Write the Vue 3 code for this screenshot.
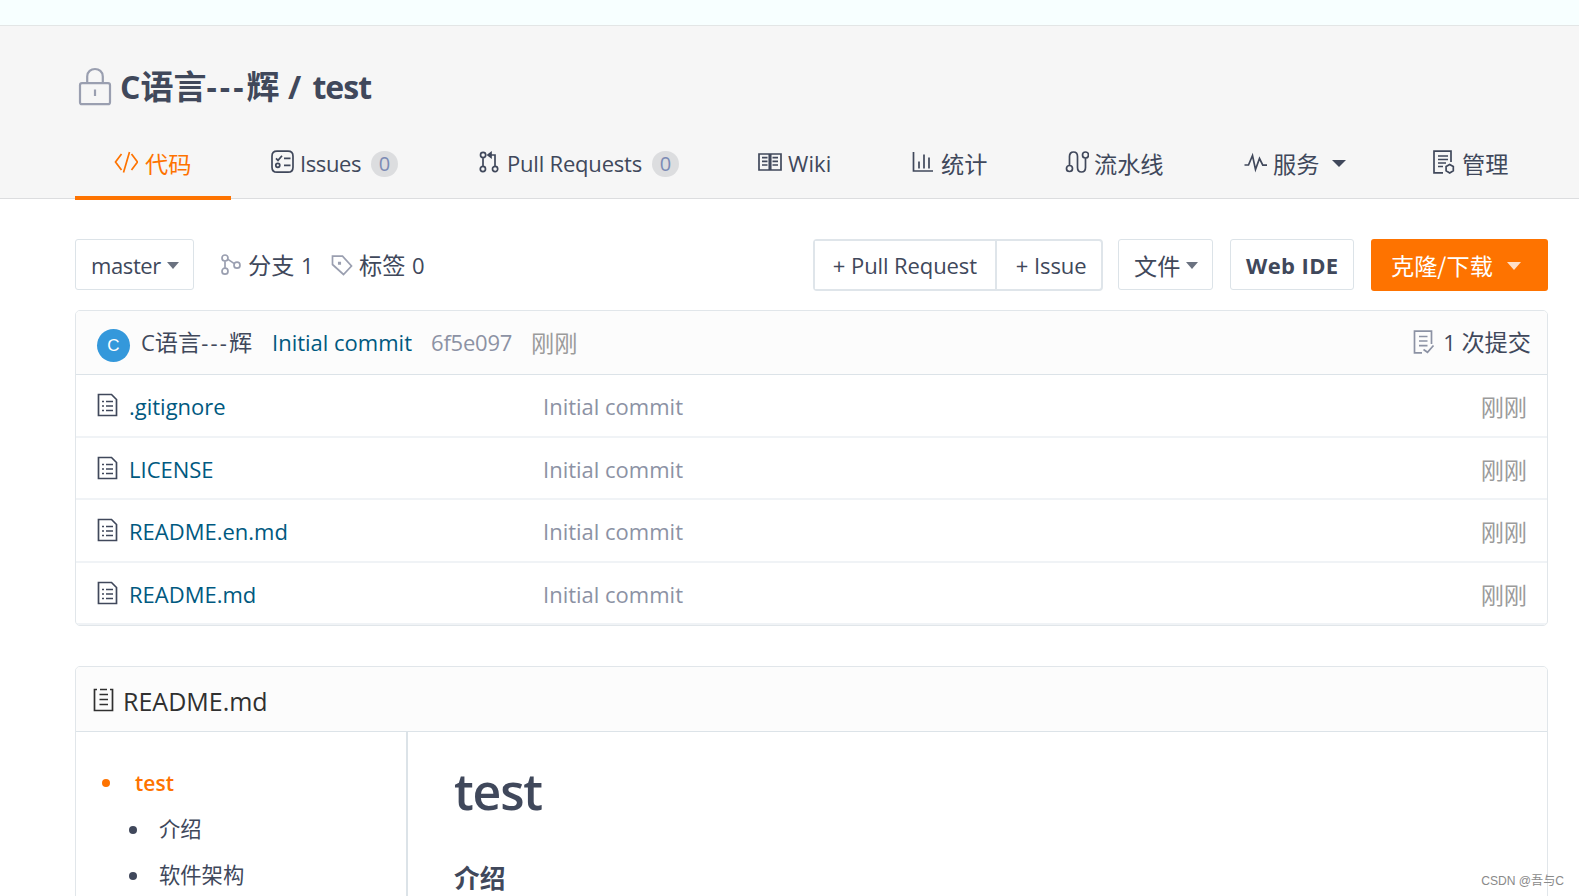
<script setup>
import { ref } from "vue";

// every icon is a stroked path on a 24x24 grid
const icons = {
  code: "M7.5 4L1.5 12l6 8M17.5 4l6 8-6 8M15.5 2L9.5 22.5",
  issues:
    "M7 1.2h11q5 0 5 5v11q0 5-5 5H7q-5 0-5-5V6.2q0-5 5-5zM6 8.4l2 2 4-4.6M14 8.3h6.5M14 15.3h6.5M5.8 15.3a2 2 0 1 0 4 0a2 2 0 1 0-4 0",
  pull: "M2.5 5a2.6 2.6 0 1 0 5.2 0a2.6 2.6 0 1 0-5.2 0M2.3 19a2.6 2.6 0 1 0 5.2 0a2.6 2.6 0 1 0-5.2 0M14.5 19a2.6 2.6 0 1 0 5.2 0a2.6 2.6 0 1 0-5.2 0M5 7.6v8.8M17 16.4V5H9.5M13 2.8L10 5l3 2.2z",
  wiki: "M1 4h22v16H1zM11.3 4v16M12.7 4v16M4 7.7h5.5M4 11.4h5.5M4 15h5.5M14.5 7.7H20M14.5 11.4H20M14.5 15H20",
  chart: "M1.5 2v19H21M7 11.5v7M12 4.5v14M17 7.5v11",
  pipe: "M1.5 18.5a3 3 0 1 0 6 0a3 3 0 1 0-6 0M4.5 15.5V6.5c0-6 8-6 8 0v11c0 6 8 6 8 0V8M17.5 5a3 3 0 1 0 6 0a3 3 0 1 0-6 0",
  pulse: "M.5 15h4L8.5 5.5l3 14L15.5 8.500l3.300 6.700h4.200",
  manage:
    "M10 22.8H1V1.2h17V12M5 6h10M5 9.5h10M5 13h8M5 16.5h5M16.7 14.5l3.6 2.1v4.2l-3.6 2.1-3.6-2.1v-4.2z",
  branch:
    "M2 5a3 3 0 1 0 6 0a3 3 0 1 0-6 0M2 18.2a3 3 0 1 0 6 0a3 3 0 1 0-6 0M14 12.2a3 3 0 1 0 6 0a3 3 0 1 0-6 0M5 8v7.2M8 6.4l6.3 4.2",
  tag: "M1.5 3.2h10l9 9.8-8 8.5-11-10zM7.8 9.7h1.4v1.2H7.8z",
  commits: "M9 22.8H1.5V1.2h17V14M6 6.5h8.5M6 11h8.5M6 15.7h8.5M10.5 19.5l4 2.8 6-6.8",
  file: "M1.5 1.5h13l5 5v16h-18zM5 8.5h2M9 8.5h7M5 13h2M9 13h7M5 17.5h2M9 17.5h7",
  readme: "M5 1.5H2.5v21h18v-21H18M8 1.5h7M7.5 6.5h8.5M7.5 11.5h8.500M7.500 16.500h8.500",
};

const tabs = ref([
  { icon: "code", label: "代码", cjk: true, active: true },
  { icon: "issues", label: "Issues", count: 0 },
  { icon: "pull", label: "Pull Requests", count: 0 },
  { icon: "wiki", label: "Wiki" },
  { icon: "chart", label: "统计", cjk: true },
  { icon: "pipe", label: "流水线", cjk: true },
  { icon: "pulse", label: "服务", cjk: true, caret: true },
  { icon: "manage", label: "管理", cjk: true },
]);

const files = ref([
  { name: ".gitignore", message: "Initial commit", time: "刚刚" },
  { name: "LICENSE", message: "Initial commit", time: "刚刚" },
  { name: "README.en.md", message: "Initial commit", time: "刚刚" },
  { name: "README.md", message: "Initial commit", time: "刚刚" },
]);
</script>

<template>
  <div class="page">
    <div class="notice"></div>
    <header class="repo-header">
      <h2 class="repo-title">
        <svg class="lock" viewBox="0 0 34 40">
          <path d="M4 16.2h26q2 0 2 2v17q0 2-2 2H4q-2 0-2-2v-17q0-2 2-2zM9.2 16V9.5c0-10 15.6-10 15.6 0V16M17 22.5v6.5" />
        </svg>
        <span>C<b>语言</b><i class="dash">---</i><b>辉</b> / <i class="repo-name">test</i></span>
      </h2>
      <nav class="tabs">
        <a v-for="tab in tabs" :key="tab.icon" class="tab" :class="['tab-' + tab.icon, { active: tab.active }]">
          <svg class="icon" viewBox="0 0 24 24"><path :d="icons[tab.icon]" /></svg>
          <span class="label" :class="{ cjk: tab.cjk }">{{ tab.label }}</span>
          <span v-if="tab.count !== undefined" class="badge">{{ tab.count }}</span>
          <i v-if="tab.caret" class="caret"></i>
        </a>
      </nav>
    </header>

    <main class="content">
      <div class="toolbar">
        <button class="btn branch-btn"><span>master</span><i class="caret"></i></button>
        <div class="stat stat-branch">
          <svg class="icon" viewBox="0 0 24 24"><path :d="icons.branch" /></svg>
          <span><b>分支</b> 1</span>
        </div>
        <div class="stat">
          <svg class="icon" viewBox="0 0 24 24"><path :d="icons.tag" /></svg>
          <span><b>标签</b> 0</span>
        </div>
        <div class="actions">
          <div class="btn-group">
            <button class="group-pull"><i class="plus">+</i><span>Pull Request</span></button>
            <button class="group-issue"><i class="plus">+</i><span>Issue</span></button>
          </div>
          <button class="btn file-btn"><span class="cjk">文件</span><i class="caret"></i></button>
          <button class="btn ide-btn"><span>Web IDE</span></button>
          <button class="clone-btn"><span class="cjk">克隆/下载</span><i class="caret"></i></button>
        </div>
      </div>

      <section class="box files">
        <div class="last-commit">
          <span class="avatar">C</span>
          <span class="author">C<b>语言</b><i class="dash">---</i><b>辉</b></span>
          <a class="link">Initial commit</a>
          <span class="sha">6f5e097</span>
          <span class="time cjk">刚刚</span>
          <div class="commit-count">
            <svg class="icon" viewBox="0 0 24 24"><path :d="icons.commits" /></svg>
            <span>1 <b>次提交</b></span>
          </div>
        </div>
        <div v-for="file in files" :key="file.name" class="file-row">
          <svg class="icon" viewBox="0 0 24 24"><path :d="icons.file" /></svg>
          <a class="file-name">{{ file.name }}</a>
          <span class="message">{{ file.message }}</span>
          <span class="time cjk">{{ file.time }}</span>
        </div>
      </section>

      <section class="box readme">
        <div class="readme-head">
          <svg class="icon" viewBox="0 0 24 24"><path :d="icons.readme" /></svg>
          <span>README.md</span>
        </div>
        <div class="readme-body">
          <ul class="toc">
            <li class="toc-root">test</li>
            <li class="cjk">介绍</li>
            <li class="cjk">软件架构</li>
          </ul>
          <article class="markdown">
            <h1>test</h1>
            <h4>介绍</h4>
          </article>
        </div>
      </section>
    </main>
    <div class="watermark">CSDN @吾与C</div>
  </div>
</template>

<style>
body {
  margin: 0;
  overflow: hidden;
}
</style>

<style scoped>
* {
  box-sizing: border-box;
}
.page {
  position: relative;
  height: 896px;
  overflow: hidden;
  background-color: #fff;
  color: #40485b;
  font-family: "Open Sans", "Noto Sans CJK SC", sans-serif;
  font-size: 22px;
  line-height: 32px;
  white-space: nowrap;
}
button {
  font: inherit;
  color: inherit;
  padding: 0;
  background-color: #fff;
  border: 0;
}
b {
  font-weight: inherit;
}
b,
.cjk {
  font-family: "Noto Sans CJK SC", sans-serif;
  font-size: 23.2px;
}
i {
  font-style: normal;
}
.icon {
  width: 24px;
  height: 24px;
  flex: none;
  fill: none;
  stroke: currentColor;
  stroke-width: 1.7;
}
.caret {
  margin-top: 2px;
  border: 6px solid transparent;
  border-top: 7px solid #6b7280;
  border-bottom: 0;
}
.dash {
  letter-spacing: 2.2px;
}
.notice {
  height: 26px;
  background-color: #f7ffff;
  border-bottom: 1px solid #e3e6e6;
}
.repo-header {
  height: 173px;
  padding: 36px 31px 0 75px;
  background-color: #f6f6f6;
  border-bottom: 1px solid #dcdddf;
}
.repo-title {
  display: flex;
  align-items: center;
  height: 50px;
  margin: 0;
  font-size: 32px;
  font-weight: 700;
}
.repo-title span {
  padding-bottom: 2px;
}
.repo-title b {
  font-size: 33px;
}
.repo-title .dash {
  letter-spacing: 3.1px;
}
.repo-name {
  margin-left: 3px;
  letter-spacing: -1px;
}
.lock {
  width: 34px;
  height: 40px;
  margin: 0 8px 0 3px;
  fill: none;
  stroke: #9a9fb0;
  stroke-width: 2.2;
}
.tabs {
  display: grid;
  grid-template-columns: 195px 208px 280px 154px 153px 179px 189px 1fr;
  height: 88px;
}
.tab {
  display: flex;
  align-items: center;
  height: 88px;
  padding: 14px 0 0;
}
.tab .icon {
  margin-top: -3px;
}
.tab .label {
  margin-left: 5px;
  letter-spacing: -0.2px;
}
.tab .cjk {
  margin-top: -1px;
  letter-spacing: 0;
}
.tab-code {
  width: 156px;
  padding-left: 39px;
}
.tab-code .label {
  margin-left: 7px;
}
.tab-issues .label {
  margin-left: 6px;
  letter-spacing: -0.4px;
}
.tab-wiki .label {
  margin-left: 6px;
  letter-spacing: 0.1px;
}
.active {
  color: #fe7300;
  border-bottom: 4px solid #fe7300;
  padding-top: 18px;
}
.tab .badge {
  width: 27px;
  height: 26px;
  margin: 2px 0 0 10px;
  border-radius: 13px;
  background-color: #dcdddf;
  color: #7c8bb5;
  font-size: 20px;
  line-height: 26px;
  text-align: center;
}
.tab .caret {
  margin: 0 0 0 13px;
  border-width: 7.5px 7px 0;
  border-top-color: #40485b;
}
.content {
  padding: 40px 31px 0 75px;
}
.toolbar {
  display: flex;
  height: 52px;
}
.btn {
  display: flex;
  align-items: center;
  height: 51px;
  border: 1px solid #dce3e8;
  border-radius: 3px;
}
.branch-btn {
  width: 119px;
  padding-left: 15px;
  letter-spacing: -0.4px;
}
.branch-btn .caret {
  margin-left: 6px;
}
.stat {
  display: flex;
  align-items: center;
  height: 51px;
  word-spacing: 1px;
}
.stat .icon {
  margin-right: 4px;
  color: #9a9fb0;
}
.stat-branch {
  width: 111px;
  margin-left: 26px;
}
.actions {
  display: flex;
  margin-left: auto;
}
.btn-group {
  display: flex;
  width: 290px;
  height: 52px;
  margin-right: 15px;
  border: 2px solid #dfe5ea;
  border-radius: 4px;
}
.btn-group button {
  display: flex;
  align-items: center;
  padding-bottom: 1px;
  letter-spacing: -0.1px;
}
.btn-group .group-pull {
  width: 182px;
  padding-left: 14px;
  border-right: 2px solid #dfe5ea;
}
.btn-group .group-issue {
  padding-left: 15px;
}
.plus {
  width: 22px;
  text-indent: -2px;
}
.file-btn {
  width: 95px;
  margin-right: 17px;
  padding-left: 15px;
}
.file-btn .caret {
  margin-left: 6px;
}
.ide-btn {
  width: 124px;
  margin-right: 17px;
  padding-left: 15px;
  font-weight: 700;
  letter-spacing: 0.4px;
}
.clone-btn {
  display: flex;
  align-items: center;
  width: 177px;
  height: 52px;
  padding-left: 20px;
  border-radius: 3px;
  background-color: #fe7300;
  color: #fff;
}
.clone-btn .caret {
  margin-left: 14px;
  border-width: 8px 7px 0;
  border-top-color: #ffe0c8;
}
.box {
  border: 1px solid #e1e6ea;
  border-radius: 5px;
  overflow: hidden;
}
.files {
  height: 316px;
  margin-top: 19px;
}
.last-commit {
  display: flex;
  align-items: center;
  height: 64px;
  padding: 0 16px 2px 21px;
  background-color: #fcfcfc;
  border-bottom: 1px solid #dce3e8;
}
.avatar {
  width: 33px;
  height: 33px;
  margin-top: 7px;
  border-radius: 50%;
  background-color: #3498db;
  color: #fff;
  font-family: "Liberation Sans", sans-serif;
  font-size: 17px;
  line-height: 33px;
  text-align: center;
}
.author {
  width: 131px;
  margin-left: 11px;
}
.link,
.file-name {
  color: #005980;
}
.link {
  width: 159px;
}
.sha {
  width: 100px;
  color: #8c92a4;
  letter-spacing: -0.2px;
}
.time {
  color: #9b9b9b;
}
.commit-count {
  display: flex;
  align-items: center;
  margin-left: auto;
}
.commit-count .icon {
  margin-right: 6px;
  color: #8c92a4;
}
.file-row {
  display: grid;
  grid-template-columns: 32px 414px 1fr auto;
  align-items: center;
  height: 62.5px;
  padding: 2px 20px 0 21px;
  border-bottom: 2px solid #f0f3f6;
}
.file-row .icon {
  margin-top: -2px;
}
.message {
  color: #8c92a4;
}
.readme {
  height: 300px;
  margin-top: 40px;
}
.readme-head {
  display: flex;
  align-items: center;
  height: 65px;
  padding: 4px 0 0 16px;
  background-color: #fcfcfc;
  border-bottom: 1px solid #dce3e8;
  color: #303030;
  font-size: 25px;
}
.readme-head .icon {
  margin: -2px 7px 0 0;
}
.readme-body {
  display: flex;
  height: 234px;
}
.toc {
  width: 332px;
  margin: 0;
  padding: 29px 0 0 26px;
  border-right: 2px solid #dce3e8;
  list-style: none;
}
.toc li {
  display: flex;
  align-items: center;
  height: 46px;
  padding: 0 0 4px 27px;
  font-size: 21.3px;
}
.toc li::before {
  content: "";
  width: 8px;
  height: 8px;
  margin: 4px 22px 0 0;
  border-radius: 50%;
  background-color: currentColor;
}
.toc .toc-root {
  padding: 0 0 2px;
  color: #fe7300;
  font-size: 21px;
  font-weight: 600;
}
.toc .toc-root::before {
  margin: 0 25px 0 0;
}
.markdown {
  padding: 22px 0 0 46px;
}
.markdown h1 {
  margin: 0;
  font-size: 50px;
  font-weight: 600;
  letter-spacing: -1.2px;
  line-height: 74px;
}
.markdown h4 {
  margin: 31px 0 0;
  font-family: "Noto Sans CJK SC", sans-serif;
  font-size: 25.7px;
  font-weight: 700;
  line-height: 36px;
}
.watermark {
  position: absolute;
  right: 15px;
  bottom: 6px;
  color: #8a8a8a;
  font-family: "Liberation Sans", "Noto Sans CJK SC", sans-serif;
  font-size: 12.1px;
  line-height: 18px;
}
</style>
